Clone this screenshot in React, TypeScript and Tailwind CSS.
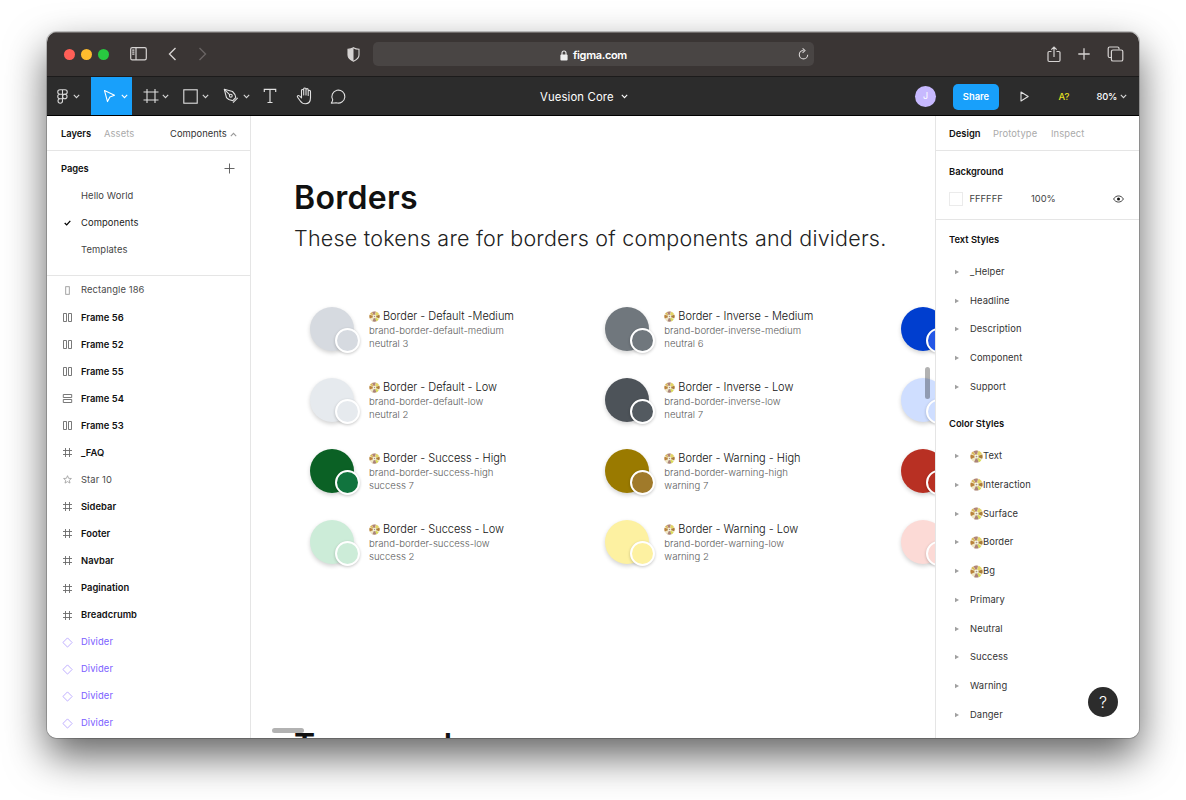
import React from "react";

type IconProps = { className?: string };

const Chevron = ({ className = "" }: IconProps) => (
  <svg className={"shrink-0 " + className} width="7" height="5" viewBox="0 0 7 5" fill="none" stroke="currentColor" strokeWidth="1.1">
    <path d="M0.8 0.9 L3.5 3.6 L6.2 0.9" />
  </svg>
);

const FigmaLogo = () => (
  <svg width="11" height="15" viewBox="0 0 11 15" fill="none" stroke="#d8d8d8" strokeWidth="1.1">
    <path d="M5.5 0.7H3a2.25 2.25 0 0 0 0 4.5h2.5zM5.5 5.2H3a2.25 2.25 0 0 0 0 4.5h2.5zM5.5 9.7H3A2.25 2.25 0 1 0 5.5 12zM5.5 0.7H8a2.25 2.25 0 0 1 0 4.5H5.5z" />
    <circle cx="7.8" cy="7.45" r="2.25" />
  </svg>
);

const MoveIcon = () => (
  <svg width="14" height="14" viewBox="0 0 14 14" fill="none" stroke="#fff" strokeWidth="1.1" strokeLinejoin="round">
    <path d="M1.5 1.6 L11.5 6.3 L6.9 7.9 L4.5 12.6z" />
  </svg>
);

const FrameIcon = () => (
  <svg width="16" height="16" viewBox="0 0 16 16" fill="none" stroke="#e0e0e0" strokeWidth="1.1">
    <path d="M4 1v14M12 1v14M0.5 4h15M0.5 12h15" />
  </svg>
);

const RectIcon = () => (
  <svg width="15" height="15" viewBox="0 0 15 15" fill="none" stroke="#e0e0e0" strokeWidth="1.1">
    <rect x="0.8" y="0.8" width="13.4" height="13.4" />
  </svg>
);

const PenIcon = () => (
  <svg width="16" height="16" viewBox="0 0 16 16" fill="none" stroke="#e0e0e0" strokeWidth="1.1" strokeLinejoin="round">
    <path d="M1.3 1.3 L9.5 3.5 C11.4 5.2 12.5 7.4 12.8 9.5 L9.8 12.6 C7 12.4 4.8 11.3 3.5 9.6z" />
    <path d="M1.3 1.3 L6.8 6.8M10 14.6 L14.7 9.9" />
    <circle cx="7.8" cy="7.7" r="1.4" />
  </svg>
);

const TextIcon = () => (
  <svg width="14" height="16" viewBox="0 0 14 16" fill="none" stroke="#e0e0e0" strokeWidth="1.2">
    <path d="M1.3 4V1.3H12.7V4M7 1.3V14.5M4.5 14.5h5" />
  </svg>
);

const HandIcon = () => (
  <svg width="18" height="18" viewBox="0 0 18 18" fill="none" stroke="#e0e0e0" strokeWidth="1.1" strokeLinejoin="round" strokeLinecap="round">
    <path d="M5.5 10.8V3.6c0-1.5 2.2-1.5 2.2 0V8M7.7 8V2.1c0-1.5 2.3-1.5 2.3 0V8M10 8V2.7c0-1.4 2.2-1.4 2.2 0V8.5M12.2 8.5V4.5c0-1.5 2.3-1.4 2.3 0v6.3c0 3.8-2.1 6-5.2 6-2.7 0-4-1.2-5.2-3L1.6 10.3c-.9-1.3.8-2.4 1.8-1.4l2.1 1.9" />
  </svg>
);

const CommentIcon = () => (
  <svg width="17" height="17" viewBox="0 0 17 17" fill="none" stroke="#e0e0e0" strokeWidth="1.1" strokeLinejoin="round">
    <path d="M2.7 11.8 A6.5 6.5 0 1 1 6.1 14.7 C5 15 3.3 15.1 1.3 15.1 C2 14 2.7 13 2.7 11.8z" />
  </svg>
);

/** Shiny disc used as a prefix in token names. */
const Disc = ({ size }: { size: number }) => (
  <svg className="shrink-0" width={size} height={size} viewBox="0 0 12 12">
    <circle cx="6" cy="6" r="5.6" fill="#efe6c4" />
    <path d="M6 6 L3.2 1.2 A5.6 5.6 0 0 1 7.4 0.6z" fill="#b08378" />
    <path d="M6 6 L8 0.8 A5.6 5.6 0 0 1 11 3.6z" fill="#e3d565" />
    <path d="M6 6 L11.4 4.2 A5.6 5.6 0 0 1 11.2 8z" fill="#a97c38" />
    <path d="M6 6 L10.4 9.4 A5.6 5.6 0 0 1 8.2 11.2z" fill="#d9dd55" />
    <path d="M6 6 L8 11.2 A5.6 5.6 0 0 1 3.8 11.2z" fill="#a98279" />
    <path d="M6 6 L0.9 8.3 A5.6 5.6 0 0 1 0.7 4.2z" fill="#b9823c" />
    <path d="M6 6 L1.2 3.1 A5.6 5.6 0 0 1 2.8 1.4z" fill="#d8b758" />
    <circle cx="6" cy="6" r="1.9" fill="#f7f4e8" />
    <circle cx="6" cy="6" r="0.8" fill="#a79d7c" />
  </svg>
);

type LayerKind = "rect" | "cols" | "rows" | "frame" | "star" | "diamond";

const LayerIcon = ({ kind }: { kind: LayerKind }) => (
  <svg className="shrink-0" width="11" height="11" viewBox="0 0 11 11" fill="none" stroke={kind === "diamond" ? "#b8a6ff" : kind === "rect" || kind === "star" ? "#9a9a9a" : "#6a6a6a"} strokeWidth="0.9">
    {kind === "rect" && <rect x="3.7" y="1.7" width="3.6" height="7.6" />}
    {kind === "cols" && <path d="M1.5 1.5h3v8h-3zM6.5 1.5h3v8h-3z" />}
    {kind === "rows" && <path d="M1.3 1.5h8.4v3H1.3zM1.3 6.5h8.4v3H1.3z" />}
    {kind === "frame" && <path d="M3.5 1v9M7.5 1v9M1 3.5h9M1 7.5h9" />}
    {kind === "star" && <path d="M5.5 1.7l1.1 2.6 2.8.2-2.1 1.8.7 2.8-2.5-1.5L3 9.1l.7-2.8-2.1-1.8 2.8-.2z" strokeWidth="0.8" />}
    {kind === "diamond" && <path d="M5.5 0.9L10.1 5.5L5.5 10.1L0.9 5.5z" />}
  </svg>
);

const layers: [LayerKind, string][] = [
  ["rect", "Rectangle 186"],
  ["cols", "Frame 56"],
  ["cols", "Frame 52"],
  ["cols", "Frame 55"],
  ["rows", "Frame 54"],
  ["cols", "Frame 53"],
  ["frame", "_FAQ"],
  ["star", "Star 10"],
  ["frame", "Sidebar"],
  ["frame", "Footer"],
  ["frame", "Navbar"],
  ["frame", "Pagination"],
  ["frame", "Breadcrumb"],
  ["diamond", "Divider"],
  ["diamond", "Divider"],
  ["diamond", "Divider"],
  ["diamond", "Divider"],
];

const layerTone = (kind: LayerKind) => {
  if (kind === "diamond") return "text-[#7b61ff]";
  if (kind === "rect" || kind === "star") return "text-[#4a4a4a]";
  return "font-semibold tracking-[0.02px] text-[#111]";
};

type Token = { big: string; small: string; name: string; token: string; alias: string };

const columns: Token[][] = [
  [
    { big: "bg-[#d6dae0]", small: "bg-[#d6dae0]", name: "Border - Default -Medium", token: "brand-border-default-medium", alias: "neutral 3" },
    { big: "bg-[#e6eaee]", small: "bg-[#e6eaee]", name: "Border - Default - Low", token: "brand-border-default-low", alias: "neutral 2" },
    { big: "bg-[#0b6125]", small: "bg-[#11743e]", name: "Border - Success - High", token: "brand-border-success-high", alias: "success 7" },
    { big: "bg-[#ccecd8]", small: "bg-[#ccecd8]", name: "Border - Success - Low", token: "brand-border-success-low", alias: "success 2" },
  ],
  [
    { big: "bg-[#70777d]", small: "bg-[#70777d]", name: "Border - Inverse - Medium", token: "brand-border-inverse-medium", alias: "neutral 6" },
    { big: "bg-[#4d5359]", small: "bg-[#535a60]", name: "Border - Inverse - Low", token: "brand-border-inverse-low", alias: "neutral 7" },
    { big: "bg-[#9a7a00]", small: "bg-[#a07a2a]", name: "Border - Warning - High", token: "brand-border-warning-high", alias: "warning 7" },
    { big: "bg-[#fdf1a1]", small: "bg-[#fdf1a1]", name: "Border - Warning - Low", token: "brand-border-warning-low", alias: "warning 2" },
  ],
  [
    { big: "bg-[#003ecf]", small: "bg-[#2457e6]", name: "", token: "", alias: "" },
    { big: "bg-[#cfdeff]", small: "bg-[#cfdeff]", name: "", token: "", alias: "" },
    { big: "bg-[#b83023]", small: "bg-[#b83023]", name: "", token: "", alias: "" },
    { big: "bg-[#fcdad6]", small: "bg-[#fcdad6]", name: "", token: "", alias: "" },
  ],
];

const Swatch = ({ t }: { t: Token }) => (
  <div className="flex h-[71px] w-[295.3px] shrink-0 items-start">
    <div className={"relative mt-px size-[44px] shrink-0 rounded-full shadow-[0_2px_4px_rgba(0,0,0,0.18)] " + t.big}>
      <div className={"absolute left-[25px] top-[20.5px] size-[25px] rounded-full border-2 border-white shadow-[0_1px_3px_rgba(0,0,0,0.22)] " + t.small} />
    </div>
    {t.name && (
      <div className="ml-[15px] flex flex-col whitespace-nowrap pt-[3px]">
        <div className="flex h-[15px] items-center gap-[3px] text-[11px] font-light tracking-[-0.03px] text-[#111]">
          <Disc size={11} />
          <span>{t.name}</span>
        </div>
        <div className="h-[14px] text-[9.6px] font-light leading-[14px] tracking-[0.01px] text-[#5c5c5c]">{t.token}</div>
        <div className="h-[13px] text-[9.6px] font-light leading-[12px] tracking-[0.01px] text-[#5c5c5c]">{t.alias}</div>
      </div>
    )}
  </div>
);

const StyleRow = ({ label, disc }: { label: string; disc?: boolean }) => (
  <div className="flex h-[28.75px] shrink-0 items-center pl-[18px] text-[9.4px] text-[#333]">
    <svg width="6" height="6" viewBox="0 0 6 6" className="mr-[10px]">
      <path d="M1 0.8L5 3L1 5.2z" fill="#a0a0a0" />
    </svg>
    {disc && <Disc size={13} />}
    <span className="tracking-[0.07px]">{label}</span>
  </div>
);

const TitleBar = () => (
  <div className="flex h-[45px] shrink-0 items-center border-b border-[#1c1b1b] bg-[#3a3534] text-[#d6d3d2] shadow-[inset_0_1px_0_#6f6b6a]">
    <div className="ml-[17px] flex w-[66px] gap-[6px]">
      <span className="size-[11px] rounded-full bg-[#ff5f57]" />
      <span className="size-[11px] rounded-full bg-[#febc2e]" />
      <span className="size-[11px] rounded-full bg-[#28c840]" />
    </div>
    <svg width="17" height="14" viewBox="0 0 17 14" fill="none" stroke="currentColor" strokeWidth="1.2">
      <rect x="0.7" y="0.7" width="15.6" height="12.2" rx="1.6" />
      <path d="M6 0.7v12.2M2.2 3.2h2.2M2.2 5.2h2.2M2.2 7.2h2.2" />
    </svg>
    <svg className="ml-[21px]" width="9" height="14" viewBox="0 0 9 14" fill="none" stroke="currentColor" strokeWidth="1.4">
      <path d="M7.5 1L1.5 7L7.5 13" />
    </svg>
    <svg className="ml-[21px]" width="9" height="14" viewBox="0 0 9 14" fill="none" stroke="#696463" strokeWidth="1.4">
      <path d="M1.5 1L7.5 7L1.5 13" />
    </svg>
    <svg className="ml-[140px]" width="13" height="15" viewBox="0 0 13 15">
      <path d="M6.5 0.7C4.7 1.8 2.8 2.2 1 2.3V8c0 3 2.5 4.8 5.5 6.2C9.5 12.8 12 11 12 8V2.3C10.2 2.2 8.3 1.8 6.5 0.7z" fill="none" stroke="currentColor" strokeWidth="1.1" />
      <path d="M6.5 0.7C4.7 1.8 2.8 2.2 1 2.3V8c0 3 2.5 4.8 5.5 6.2z" fill="currentColor" />
    </svg>
    <div className="ml-[13px] flex h-[24px] w-[441px] items-center rounded-[5px] bg-[#494544] pr-[5px] text-white">
      <div className="flex flex-1 items-center pl-[187px] pt-[2px]">
        <svg width="8" height="11" viewBox="0 0 8 11">
          <rect x="0.4" y="4.6" width="7.2" height="5.8" rx="1" fill="#eee" />
          <path d="M2 5V3a2 2 0 0 1 4 0v2" fill="none" stroke="#eee" strokeWidth="1.1" />
        </svg>
        <span className="ml-[5px] text-[11px] font-semibold leading-[13px] tracking-[-0.32px]">figma.com</span>
      </div>
      <svg width="11" height="12" viewBox="0 0 11 12" fill="none" stroke="#d6d3d2" strokeWidth="1.1">
        <path d="M5.5 2.5A4.2 4.2 0 1 0 9.7 6.7M4.6 0.4L7 2.6L4.6 4.9" />
      </svg>
    </div>
    <svg className="ml-[233px]" width="14" height="17" viewBox="0 0 14 17" fill="none" stroke="currentColor" strokeWidth="1.2">
      <path d="M4.5 5.5H2.2Q1 5.5 1 6.7V14.3Q1 15.5 2.2 15.5H11.8Q13 15.5 13 14.3V6.7Q13 5.5 11.8 5.5H9.5M7 11V1.2M4.3 3.7L7 1L9.7 3.7" />
    </svg>
    <svg className="ml-[17px]" width="12" height="12" viewBox="0 0 12 12" stroke="currentColor" strokeWidth="1.3">
      <path d="M6 0.3v11.4M0.3 6h11.4" />
    </svg>
    <svg className="ml-[17px]" width="17" height="16" viewBox="0 0 17 16" fill="none" stroke="currentColor" strokeWidth="1.2">
      <rect x="4.4" y="4" width="11.4" height="11" rx="1.6" />
      <path d="M4 11.5H2.6Q1.2 11.5 1.2 10.1V2.4Q1.2 1 2.6 1H10.5Q12 1 12 2.4V3.5" />
    </svg>
  </div>
);

const Toolbar = () => (
  <div className="flex h-[39px] shrink-0 items-center border-b border-black bg-[#2c2c2c] text-[#d8d8d8]">
    <div className="flex w-[44px] items-center gap-[5px] pl-[10px]"><FigmaLogo /><Chevron /></div>
    <div className="flex h-full w-[41px] items-center gap-[4px] bg-[#18a0fb] pl-[12px] text-white"><MoveIcon /><Chevron /></div>
    <div className="flex w-[41px] items-center gap-[3px] pl-[11px]"><FrameIcon /><Chevron /></div>
    <div className="flex w-[40px] items-center gap-[4px] pl-[10px]"><RectIcon /><Chevron /></div>
    <div className="flex w-[40px] items-center gap-[4px] pl-[10px]"><PenIcon /><Chevron /></div>
    <div className="flex w-[34px] items-center pl-[10px]"><TextIcon /></div>
    <div className="flex w-[33px] items-center pl-[8.5px]"><HandIcon /></div>
    <div className="flex w-[220px] items-center pl-[9.5px]"><CommentIcon /></div>
    <div className="flex w-[375px] items-center gap-[7px] text-[11.3px] text-white">
      <span className="pt-[2px] leading-[14px] tracking-[0.14px]">Vuesion Core</span>
      <Chevron />
    </div>
    <div className="flex size-[21px] items-center justify-center rounded-full bg-[#c7b9ff] text-[9px] text-white">J</div>
    <div className="ml-[17px] mt-px flex h-[26px] w-[46px] items-center justify-center rounded-[5px] bg-[#18a0fb] pt-px text-[9.4px] font-semibold text-white">Share</div>
    <svg className="ml-[21px]" width="9" height="11" viewBox="0 0 9 11" fill="none" stroke="#e0e0e0" strokeWidth="1.1" strokeLinejoin="round">
      <path d="M1 1L8.2 5.5L1 10z" />
    </svg>
    <span className="ml-[29.5px] w-[38px] pt-[2px] text-[9.4px] font-medium text-[#e5e020]">A?</span>
    <span className="w-[23.5px] pt-[2px] text-[9.4px] font-medium tracking-[-0.2px] text-white">80%</span>
    <Chevron />
  </div>
);

const LeftPanel = () => (
  <div className="flex w-[204px] shrink-0 flex-col border-r border-[#e5e5e5] text-[9.4px] tracking-[0.1px]">
    <div className="flex h-[35px] shrink-0 items-center border-b border-[#e5e5e5] pl-[14px] pt-[2px]">
      <span className="w-[43px] font-semibold tracking-[-0.05px] text-[#111]">Layers</span>
      <span className="w-[66px] text-[#aaa]">Assets</span>
      <span className="w-[60px] tracking-[0.03px] text-[#333]">Components</span>
      <Chevron className="rotate-180 text-[#999]" />
    </div>
    <div className="flex h-[125px] shrink-0 flex-col border-b border-[#e5e5e5] pt-[4px]">
      <div className="flex h-[27px] items-center justify-between pl-[14px] pr-[15px]">
        <span className="pt-px font-semibold tracking-[-0.05px] text-[#111]">Pages</span>
        <svg width="11" height="11" viewBox="0 0 11 11" stroke="#555" strokeWidth="0.9"><path d="M5.5 0.5v10M0.5 5.5h10" /></svg>
      </div>
      <div className="flex h-[27px] items-center pl-[34px] pt-px text-[#444]">Hello World</div>
      <div className="flex h-[27px] items-center pl-[17px] pt-px text-[#222]">
        <svg className="mb-px mr-[10px]" width="7" height="6" viewBox="0 0 7 6" fill="none" stroke="#000" strokeWidth="1.3"><path d="M0.7 3L2.7 4.9L6.3 0.9" /></svg>
        Components
      </div>
      <div className="flex h-[27px] items-center pl-[34px] pt-px text-[#444]">Templates</div>
    </div>
    <div className="flex flex-col pt-px">
      {layers.map(([kind, label], i) => (
        <div key={i} className={"flex h-[27.05px] shrink-0 items-center gap-[8px] pl-[15px] " + layerTone(kind)}>
          <LayerIcon kind={kind} />
          <span>{label}</span>
        </div>
      ))}
    </div>
  </div>
);

const Canvas = () => (
  <div className="relative min-w-0 flex-1 overflow-hidden">
    <div className="pl-[43px] pt-[59px]">
      <h1 className="h-[46px] text-[32px] font-semibold leading-[46px] tracking-[0.3px] text-[#111]">Borders</h1>
      <p className="h-[36px] whitespace-nowrap text-[21.5px] font-light leading-[35px] tracking-[0.22px] text-[#222]">
        These tokens are for borders of components and dividers.
      </p>
      <div className="flex pl-[16px] pt-[49px]">
        {columns.map((col, i) => (
          <div key={i} className="flex flex-col">
            {col.map((t, j) => <Swatch key={j} t={t} />)}
          </div>
        ))}
      </div>
      <h1 className="mt-[133px] h-[46px] text-[32px] font-semibold leading-[46px] tracking-[0.2px] text-[#111]">Typography</h1>
    </div>
    <div className="absolute left-[21px] top-[612px] h-[5px] w-[32px] rounded-full bg-black/30" />
    <div className="absolute right-[5px] top-[251px] h-[32px] w-[5px] rounded-full bg-black/30" />
  </div>
);

const RightPanel = () => (
  <div className="relative flex w-[204px] shrink-0 flex-col overflow-hidden border-l border-[#e5e5e5] text-[9.4px] tracking-[0.1px]">
    <div className="flex h-[35px] shrink-0 items-center border-b border-[#e5e5e5] pl-[13px] pt-[2px] text-[#aaa]">
      <span className="w-[44px] font-semibold tracking-[0px] text-[#111]">Design</span>
      <span className="w-[58px]">Prototype</span>
      <span>Inspect</span>
    </div>
    <div className="flex h-[69px] shrink-0 flex-col border-b border-[#e5e5e5] pl-[13px] pt-[8px]">
      <div className="flex h-[27px] items-center font-semibold tracking-[-0.03px] text-[#111]">Background</div>
      <div className="flex h-[27px] items-center text-[#444]">
        <span className="mb-px mr-[6.5px] size-[14px] border border-[#ebebeb]" />
        <span className="w-[61.5px] tracking-[0px]">FFFFFF</span>
        <span className="w-[82px] tracking-[-0.05px]">100%</span>
        <svg className="mb-px" width="11" height="8" viewBox="0 0 11 8" fill="none" stroke="#333" strokeWidth="0.9">
          <path d="M0.6 4C2.8 -0.1 8.2 -0.1 10.4 4C8.2 8.1 2.8 8.1 0.6 4z" />
          <circle cx="5.5" cy="4" r="1.5" fill="#111" stroke="none" />
        </svg>
      </div>
    </div>
    <div className="flex h-[37.5px] shrink-0 items-center pl-[13px] pt-[2px] font-semibold tracking-[0px] text-[#111]">Text Styles</div>
    {["_Helper", "Headline", "Description", "Component", "Support"].map((s) => <StyleRow key={s} label={s} />)}
    <div className="flex h-[40.5px] shrink-0 items-center pb-[4px] pl-[13px] pt-[10px] font-semibold tracking-[0px] text-[#111]">Color Styles</div>
    {["Text", "Interaction", "Surface", "Border", "Bg"].map((s) => <StyleRow key={s} label={s} disc />)}
    {["Primary", "Neutral", "Success", "Warning", "Danger"].map((s) => <StyleRow key={s} label={s} />)}
    <div className="absolute bottom-[21px] right-[21px] flex size-[30px] items-center justify-center rounded-full bg-[#2c2c2c] text-[16px] font-light text-white">?</div>
  </div>
);

export default function App() {
  return (
    <div className="h-[800px] w-[1186px] overflow-hidden bg-white pl-[47px] pt-[32px] font-['Inter','Liberation_Sans',sans-serif]">
      <div className="w-[1092px] rounded-[10px] shadow-[0_18px_40px_rgba(0,0,0,0.62),0_0_0_1px_rgba(0,0,0,0.2)]">
        <div className="flex h-[706px] w-[1092px] flex-col overflow-hidden rounded-[10px] bg-white">
          <TitleBar />
          <Toolbar />
          <div className="flex min-h-0 flex-1">
            <LeftPanel />
            <Canvas />
            <RightPanel />
          </div>
        </div>
      </div>
    </div>
  );
}
